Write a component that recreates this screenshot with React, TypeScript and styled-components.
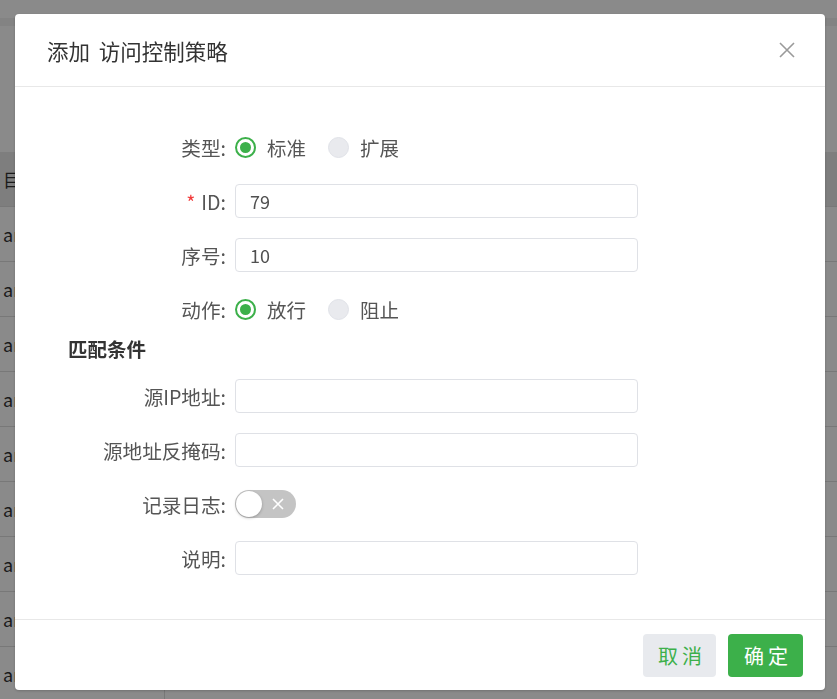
import * as React from 'react';
import styled, { createGlobalStyle } from 'styled-components';

const GlobalStyle = createGlobalStyle`
  html, body {
    margin: 0;
    padding: 0;
    background: #ffffff;
    font-family: "Noto Sans CJK SC", "Noto Sans", sans-serif;
  }
  * {
    box-sizing: border-box;
  }
`;

const green = '#3cb04a';

// page lying under the modal mask
const PageBehind = styled.div`
  width: 837px;
  height: 699px;
  overflow: hidden;
  background: #ffffff;
  display: flex;
  flex-direction: column;
`;

const TopBand = styled.div`
  height: 26px;
  flex-shrink: 0;
  background: #ffffff;
  border-bottom: 8px solid #f2f2f2;
  margin-bottom: 126px;
`;

const Table = styled.div`
  display: flex;
  flex-direction: column;
`;

const TableRow = styled.div<{ $head?: boolean }>`
  height: 55px;
  display: grid;
  grid-template-columns: 165px 1fr;
  align-items: center;
  background: ${props => (props.$head ? '#e9e9e9' : '#ffffff')};
  border-bottom: 1px solid #dedede;
  font-size: 18px;
  color: #333;
`;

const Cell = styled.div`
  height: 100%;
  display: flex;
  align-items: center;
  padding-left: 3px;
  border-right: 1px solid #dedede;
`;

const Mask = styled.div`
  position: fixed;
  inset: 0;
  background: rgba(0, 0, 0, 0.46);
  display: flex;
  align-items: flex-start;
  padding: 14px 0 0 15px;
`;

const Dialog = styled.div`
  width: 810px;
  height: 676px;
  background: #ffffff;
  border-radius: 4px;
  display: flex;
  flex-direction: column;
  box-shadow: 0 1px 3px rgba(0, 0, 0, 0.2);
`;

const Header = styled.div`
  height: 73px;
  flex-shrink: 0;
  display: flex;
  align-items: center;
  justify-content: space-between;
  padding: 0 30px 0 32px;
  border-bottom: 1px solid #e8e8e8;
`;

const Title = styled.h2`
  margin: 0;
  font-size: 21.5px;
  font-weight: 400;
  color: #333333;
  word-spacing: 4px;
`;

const CloseButton = styled.button`
  border: 0;
  background: none;
  padding: 0;
  width: 16px;
  height: 16px;
  display: flex;
  cursor: pointer;
  color: #9a9a9a;
`;

const Body = styled.div`
  flex: 1;
  padding: 43px 0 0 53px;
`;

const FormItem = styled.div`
  display: grid;
  grid-template-columns: 158px 403px;
  column-gap: 9px;
  align-items: center;
  height: 34px;
  margin-bottom: 20px;
`;

const Label = styled.label<{ $required?: boolean }>`
  text-align: right;
  font-size: 19.6px;
  color: #555555;
  white-space: nowrap;

  &::before {
    content: ${props => (props.$required ? "'*'" : 'none')};
    color: #f23c3c;
    margin-right: 6px;
  }
`;

const Input = styled.input`
  width: 100%;
  height: 34px;
  border: 1px solid #dfe1e6;
  border-radius: 4px;
  padding: 0 14px;
  font-family: "Noto Sans CJK SC", "Noto Sans", sans-serif;
  font-size: 18px;
  color: #505050;
  outline: none;
  background: #fff;
`;

const RadioGroup = styled.div`
  display: flex;
  align-items: center;
  gap: 22px;
`;

const RadioOption = styled.label`
  display: flex;
  align-items: center;
  gap: 11px;
  font-size: 19.5px;
  color: #555555;
  cursor: pointer;
`;

const RadioDot = styled.span<{ $checked?: boolean }>`
  width: 21px;
  height: 21px;
  border-radius: 50%;
  border: ${props => (props.$checked ? `2px solid ${green}` : '1px solid #e0e2e8')};
  background: ${props => (props.$checked ? '#ffffff' : '#e9eaee')};
  display: flex;
  align-items: center;
  justify-content: center;

  &::after {
    content: '';
    display: ${props => (props.$checked ? 'block' : 'none')};
    width: 11px;
    height: 11px;
    border-radius: 50%;
    background: ${green};
  }
`;

const SectionTitle = styled.div`
  margin: -10px 0 17px 0;
  font-size: 19.5px;
  line-height: 26px;
  font-weight: 700;
  color: #333333;
`;

const Switch = styled.span`
  width: 61px;
  height: 28px;
  border-radius: 14px;
  background: #c4c4c4;
  display: flex;
  align-items: center;
  justify-content: space-between;
  padding: 0 12px 0 1px;
  color: #ffffff;
`;

const SwitchKnob = styled.span`
  width: 26px;
  height: 26px;
  border-radius: 50%;
  background: #ffffff;
  box-shadow: 0 1px 3px rgba(0, 0, 0, 0.25);
`;

const Footer = styled.div`
  height: 71px;
  flex-shrink: 0;
  border-top: 1px solid #e8e8e8;
  display: flex;
  align-items: center;
  justify-content: flex-end;
  gap: 12px;
  padding: 0 22px 0 0;
`;

const Button = styled.button<{ $primary?: boolean }>`
  height: 43px;
  border: 0;
  border-radius: 4px;
  padding: ${props => (props.$primary ? '0 11px 0 16px' : '0 10px 0 15px')};
  font-family: "Noto Sans CJK SC", "Noto Sans", sans-serif;
  font-size: 20px;
  letter-spacing: 4px;
  cursor: pointer;
  background: ${props => (props.$primary ? green : '#e8eaee')};
  color: ${props => (props.$primary ? '#ffffff' : green)};
`;

const CloseIcon = () => (
  <svg width="16" height="16" viewBox="0 0 16 16" fill="none" stroke="currentColor" strokeWidth="1.6">
    <path d="M1 1L15 15M15 1L1 15" />
  </svg>
);

const SmallX = () => (
  <svg width="12" height="12" viewBox="0 0 12 12" fill="none" stroke="currentColor" strokeWidth="1.6">
    <path d="M1 1L11 11M11 1L1 11" />
  </svg>
);

interface RadioProps {
  options: string[];
  value: string;
}

const Radios: React.FC<RadioProps> = ({ options, value }) => (
  <RadioGroup>
    {options.map(opt => (
      <RadioOption key={opt}>
        <RadioDot $checked={opt === value} />
        {opt}
      </RadioOption>
    ))}
  </RadioGroup>
);

const App: React.FC = () => {
  return (
    <>
      <GlobalStyle />
      <PageBehind>
        <TopBand />
        <Table>
          <TableRow $head>
            <Cell>目标</Cell>
            <div />
          </TableRow>
          {Array.from({ length: 9 }).map((_, i) => (
            <TableRow key={i}>
              <Cell>any</Cell>
              <div />
            </TableRow>
          ))}
        </Table>
      </PageBehind>
      <Mask>
        <Dialog>
          <Header>
            <Title>添加 访问控制策略</Title>
            <CloseButton aria-label="关闭">
              <CloseIcon />
            </CloseButton>
          </Header>
          <Body>
            <FormItem>
              <Label>类型:</Label>
              <Radios options={['标准', '扩展']} value="标准" />
            </FormItem>
            <FormItem>
              <Label $required>ID:</Label>
              <Input defaultValue="79" />
            </FormItem>
            <FormItem>
              <Label>序号:</Label>
              <Input defaultValue="10" />
            </FormItem>
            <FormItem>
              <Label>动作:</Label>
              <Radios options={['放行', '阻止']} value="放行" />
            </FormItem>
            <SectionTitle>匹配条件</SectionTitle>
            <FormItem>
              <Label>源IP地址:</Label>
              <Input />
            </FormItem>
            <FormItem>
              <Label>源地址反掩码:</Label>
              <Input />
            </FormItem>
            <FormItem>
              <Label>记录日志:</Label>
              <Switch>
                <SwitchKnob />
                <SmallX />
              </Switch>
            </FormItem>
            <FormItem>
              <Label>说明:</Label>
              <Input />
            </FormItem>
          </Body>
          <Footer>
            <Button>取消</Button>
            <Button $primary>确定</Button>
          </Footer>
        </Dialog>
      </Mask>
    </>
  );
};

export default App;
